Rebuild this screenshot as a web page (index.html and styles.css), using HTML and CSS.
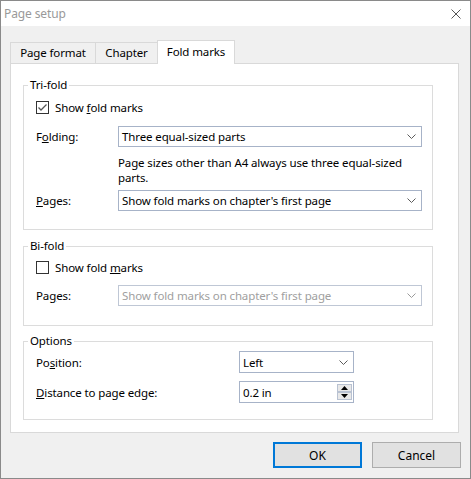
FILE: index.html
```html
<!DOCTYPE html>
<html>
<head>
<meta charset="utf-8">
<link rel="stylesheet" href="styles.css">
</head>
<body>
<div class="window">
  <div class="titlebar">
    <span class="title">Page setup</span>
    <svg class="close" width="10" height="10" viewBox="0 0 10 10"><path d="M0.5 0.5 L9.5 9.5 M9.5 0.5 L0.5 9.5" stroke="#555" stroke-width="1" fill="none"/></svg>
  </div>
  <div class="body">
    <div class="tabs">
      <div class="tab t1">Page format</div>
      <div class="tab t2">Chapter</div>
      <div class="tab active">Fold marks</div>
    </div>
    <div class="panel">
      <fieldset class="group tri">
        <legend>Tri-fold</legend>
        <div class="check"><span class="box"><svg width="11" height="11" viewBox="0 0 11 11"><path d="M1.5 5.5 L4 8 L9.5 2.5" stroke="#555" stroke-width="1.3" fill="none"/></svg></span><span>Show <u>f</u>old marks</span></div>
        <div class="row r1"><span class="lbl">F<u>o</u>lding:</span><div class="select"><span>Three equal-sized parts</span><svg class="chev" width="9" height="5" viewBox="0 0 9 5"><path d="M0.5 0.5 L4.5 4.5 L8.5 0.5" stroke="#5b5b5b" stroke-width="1" fill="none"/></svg></div></div>
        <div class="note">Page sizes other than A4 always use three <span class="nw">equal-sized</span> parts.</div>
        <div class="row r2"><span class="lbl"><u>P</u>ages:</span><div class="select"><span>Show fold marks on chapter's first page</span><svg class="chev" width="9" height="5" viewBox="0 0 9 5"><path d="M0.5 0.5 L4.5 4.5 L8.5 0.5" stroke="#5b5b5b" stroke-width="1" fill="none"/></svg></div></div>
      </fieldset>
      <fieldset class="group bi">
        <legend>Bi-fold</legend>
        <div class="check"><span class="box"></span><span>Show fold <u>m</u>arks</span></div>
        <div class="row r1"><span class="lbl">Pa<u>g</u>es:</span><div class="select disabled"><span>Show fold marks on chapter's first page</span><svg class="chev" width="9" height="5" viewBox="0 0 9 5"><path d="M0.5 0.5 L4.5 4.5 L8.5 0.5" stroke="#9a9a9a" stroke-width="1" fill="none"/></svg></div></div>
      </fieldset>
      <fieldset class="group opts">
        <legend>Options</legend>
        <div class="row r1"><span class="lbl">Po<u>s</u>ition:</span><div class="select small"><span>Left</span><svg class="chev" width="9" height="5" viewBox="0 0 9 5"><path d="M0.5 0.5 L4.5 4.5 L8.5 0.5" stroke="#5b5b5b" stroke-width="1" fill="none"/></svg></div></div>
        <div class="row r2"><span class="lbl"><u>D</u>istance to page edge:</span><div class="spin"><span>0.2 in</span><div class="spin-btns"><div class="sb"><svg width="7" height="4" viewBox="0 0 7 4"><path d="M3.5 0 L7 4 L0 4 Z" fill="#000"/></svg></div><div class="sb"><svg width="7" height="4" viewBox="0 0 7 4"><path d="M0 0 L7 0 L3.5 4 Z" fill="#000"/></svg></div></div></div></div>
      </fieldset>
    </div>
    <div class="buttons">
      <button class="btn ok">OK</button>
      <button class="btn">Cancel</button>
    </div>
  </div>
</div>
</body>
</html>
```

FILE: styles.css
```css
body {
  margin: 0;
  font-family: "Noto Sans", "Open Sans", sans-serif;
  font-size: 11.5px;
  letter-spacing: -0.12px;
  color: #000;
}

.window {
  width: 471px;
  height: 479px;
  box-sizing: border-box;
  border: 1px solid #8a8a8a;
  background: #f0f0f0;
  display: flex;
  flex-direction: column;
}

.titlebar {
  height: 25px;
  flex: none;
  background: #fff;
  display: flex;
  align-items: center;
  justify-content: space-between;
  padding: 0 9px 0 3px;
}

.title {
  color: #999;
  font-size: 12px;
}

.body {
  flex: 1;
  padding: 14px 10px 0 9px;
}

.tabs {
  display: flex;
  align-items: flex-end;
  height: 24px;
  margin-bottom: -1px;
}

.tab {
  box-sizing: border-box;
  height: 21px;
  margin-bottom: 1px;
  border: 1px solid #d9d9d9;
  border-bottom: none;
  background: #f0f0f0;
  display: flex;
  align-items: center;
  justify-content: center;
  line-height: 16px;
}

.t1 { width: 86px; }
.t2 { width: 61px; border-left: none; border-right: none; }

.tab.active {
  width: 78px;
  height: 24px;
  margin-bottom: 0;
  background: #fff;
  position: relative;
  padding-bottom: 2px;
}

.panel {
  box-sizing: border-box;
  width: 449px;
  height: 370px;
  background: #fff;
  border: 1px solid #d9d9d9;
  padding: 13px 0 0 12px;
}

.group {
  width: 410px;
  box-sizing: border-box;
  margin: 0;
  min-width: 0;
  border: 1px solid #dcdcdc;
  padding: 0 10px 18px 12px;
}

.group legend {
  padding: 0 2px;
  margin-left: -8px;
  line-height: 16px;
}

.check {
  display: flex;
  align-items: center;
  height: 20px;
  margin-top: 4px;
}

.box {
  width: 13px;
  height: 13px;
  box-sizing: border-box;
  border: 1px solid #333;
  background: #fff;
  margin-right: 6px;
  display: flex;
}

.row {
  display: flex;
  align-items: center;
}

.lbl { width: 82px; flex: none; }

.select {
  box-sizing: border-box;
  width: 304px;
  height: 21px;
  border: 1px solid #a7b3c8;
  background: #fff;
  display: flex;
  align-items: center;
  justify-content: space-between;
  padding: 0 5px 0 3px;
}

.select.disabled {
  color: #a0a0a0;
  border-color: #bfc7d5;
}

.tri .r1 { margin-top: 9px; }
.tri .r2 { margin-top: 5px; }

.note {
  margin-left: 82px;
  margin-top: 8px;
  width: 300px;
  line-height: 15px;
}

.nw { white-space: nowrap; }

.bi { margin-top: 8px; padding-bottom: 19px; }
.bi .check { margin-top: 3px; }
.bi .r1 { margin-top: 8px; }

.opts { margin-top: 7px; padding-bottom: 16px; }
.opts .lbl { width: 203px; }
.opts .r1 { margin-top: 2px; }
.opts .r2 { margin-top: 8px; }

.select.small {
  width: 115px;
  height: 22px;
}

.spin {
  box-sizing: border-box;
  width: 115px;
  height: 22px;
  border: 1px solid #a7b3c8;
  background: #fff;
  display: flex;
  align-items: center;
  justify-content: space-between;
  padding: 0 1px 0 3px;
}

.spin-btns {
  display: flex;
  flex-direction: column;
}

.sb {
  box-sizing: border-box;
  width: 15px;
  height: 8px;
  border: 1px solid #b9c2d2;
  background: #e8e8e8;
  display: flex;
  align-items: center;
  justify-content: center;
}

.buttons {
  display: flex;
  justify-content: flex-end;
  gap: 10px;
  margin-top: 9px;
  margin-right: -1px;
}

.btn {
  width: 89px;
  height: 26px;
  box-sizing: border-box;
  border: 1px solid #adadad;
  background: #e1e1e1;
  font: inherit;
  font-size: 12px;
  color: #000;
  padding: 0;
}

.btn.ok {
  border: 2px solid #0078d7;
}
```
